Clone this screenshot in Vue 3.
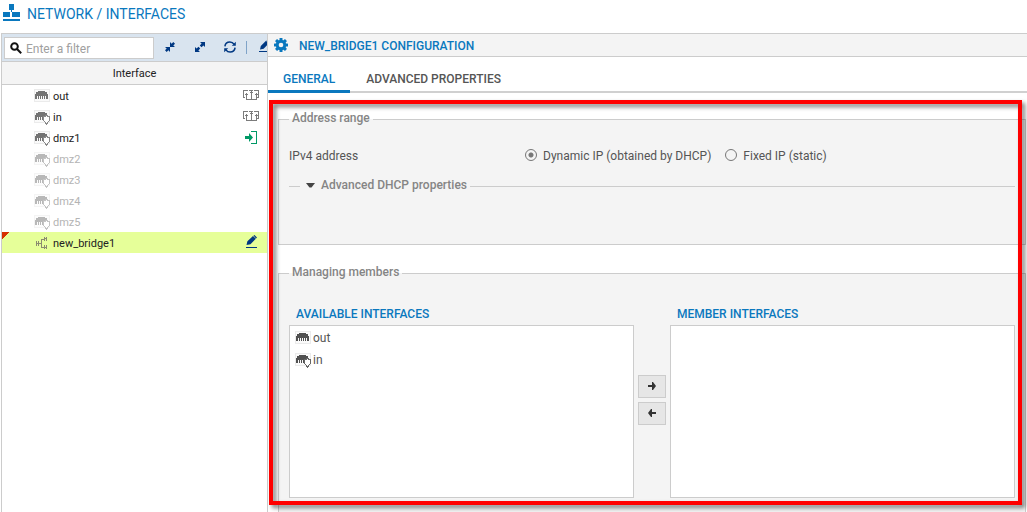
<template>
  <div class="app">
    <header class="page-header">
      <svg class="page-icon" width="17" height="17" viewBox="0 0 17 17" fill="#0a78be">
        <path d="M6 0h5v6H6zM0 8h7v5H0zM9 8h8v5H9zM0 15h17v2H0z" />
        <path d="M8 6h1v2H8z" />
      </svg>
      <h1 class="page-title">NETWORK / INTERFACES</h1>
    </header>

    <div class="layout">
      <aside class="sidebar">
        <div class="toolbar">
          <div class="search">
            <svg width="12" height="12" viewBox="0 0 12 12" fill="none" stroke="#111" stroke-width="2">
              <circle cx="4.5" cy="4.5" r="3.3" />
              <path d="M7 7l4.2 4.2" />
            </svg>
            <input v-model="filter" type="text" placeholder="Enter a filter" aria-label="Enter a filter" />
          </div>
          <button type="button" class="tool" aria-label="Collapse all">
            <svg width="10" height="10" viewBox="0 0 10 10" fill="#003882">
              <path d="M5 0v5h5L8.300 3.600 10 1.700 8.300 0 6.600 1.700zM5 10V5H0l1.700 1.400L0 8.300 1.700 10l1.700-1.700z" />
            </svg>
          </button>
          <button type="button" class="tool" aria-label="Expand all">
            <svg width="10" height="10" viewBox="0 0 10 10" fill="#003882">
              <path d="M10 0v5L8.400 3.400 6.500 5.200 4.800 3.500 6.600 1.600 5 0zM0 10V5l1.600 1.600L3.500 4.800 5.200 6.500 3.400 8.400 5 10z" />
            </svg>
          </button>
          <button type="button" class="tool" aria-label="Refresh">
            <svg width="12" height="12" viewBox="0 0 12 12" fill="none" stroke="#003882" stroke-width="1.5">
              <path d="M.9 5.300C1.200 2.900 3.300 1 5.900 1c1.700 0 3.200.8 4.100 2.200M11.100 6.700C10.800 9.100 8.700 11 6.100 11c-1.700 0-3.200-.8-4.100-2.200" />
              <path d="M11.800 .8v4H7.800zM.2 11.200v-4h4z" fill="#003882" stroke="none" />
            </svg>
          </button>
          <span class="separator"></span>
          <button type="button" class="tool tool-edit" aria-label="Edit">
            <svg width="12" height="13" viewBox="0 0 12 13" fill="#003882">
              <path d="M1 9.500l.8-3.500L7 .8 9.800 3.600 4.600 8.700zM7.500 .3l1-.3L11 2.300l-1 1zM0 11h12v1H0z" />
            </svg>
          </button>
        </div>

        <table class="interfaces">
          <thead>
            <tr><th>Interface</th></tr>
          </thead>
          <tbody>
            <tr
              v-for="item in filteredInterfaces"
              :key="item.name"
              :class="{ disabled: item.disabled, selected: item.name === selected }"
              @click="selected = item.name"
            >
              <td>
                <div class="row">
                  <svg v-if="item.type === 'bridge'" class="row-icon" width="17" height="16" viewBox="0 0 17 16" fill="none" stroke="#8a8a70" shape-rendering="crispEdges">
                    <path d="M2.500 6v5M4.500 6v5M2 8.500h6M7.500 4v9M7 4.500h3M7 12.500h3M10.500 2v4M12.500 2v4M10 3.500h3M10.500 10v4M12.500 10v4M10 12.500h3" />
                  </svg>
                  <svg v-else class="row-icon" width="17" height="16" viewBox="0 0 17 16" shape-rendering="crispEdges">
                    <path d="M.5 1.500h15v12H.5z" fill="#fafafa" stroke="#ebebeb" />
                    <path :d="portPath" fill="#747474" />
                    <path v-if="item.type === 'protected'" :d="shieldPath" fill="#fff" stroke="#8a8a8a" />
                  </svg>
                  <span class="row-name">{{ item.name }}</span>
                  <svg v-if="item.action === 'lan'" class="row-lan" width="16" height="13" viewBox="0 0 16 13" fill="none" stroke="#7c7c7c" shape-rendering="crispEdges">
                    <path d="M2 8.500H.5v-7H5M14 8.500h1.500v-7H11M6 1.500h4M8.500 1v10M3 10.500h11M3.500 4v7M13.500 4v7M2 5.500h3M12 5.500h3M7 3.500h3" />
                  </svg>
                  <svg v-if="item.action === 'enter'" class="row-enter" width="12" height="13" viewBox="0 0 12 13" fill="#009966">
                    <path d="M0 5h4V2l4 4.500L4 11V8H0z" />
                    <path d="M6 0h6v13H6v-1h5V1H6z" />
                  </svg>
                  <svg v-if="item.action === 'edit'" class="row-edit" width="12" height="13" viewBox="0 0 12 13" fill="#003882">
                    <path d="M.5 10l.9-3.700L7 1 9.800 3.800 4.500 9.200zM7.500 .5l1-.5L11 2.400l-1 1zM0 12h11v1H0z" />
                  </svg>
                </div>
              </td>
            </tr>
          </tbody>
        </table>
      </aside>

      <main class="config">
        <div class="config-header">
          <svg width="14" height="14" viewBox="0 0 14 14">
            <g fill="#0a78be">
              <rect v-for="a in [0, 45, 90, 135]" :key="a" x="5.500" width="3" height="14" rx=".5" :transform="`rotate(${a} 7 7)`" />
              <circle cx="7" cy="7" r="5.200" />
            </g>
            <circle cx="7" cy="7" r="2.300" fill="#f4f4f4" />
          </svg>
          <h2>NEW_BRIDGE1 CONFIGURATION</h2>
        </div>

        <nav class="tabs" role="tablist">
          <button
            v-for="tab in tabs"
            :key="tab"
            type="button"
            role="tab"
            class="tab"
            :class="{ active: tab === activeTab }"
            :aria-selected="tab === activeTab"
            @click="activeTab = tab"
          >{{ tab }}</button>
        </nav>

        <div class="content">
          <fieldset class="group">
            <legend>Address range</legend>
            <div class="field" role="radiogroup" aria-labelledby="ipv4-label">
              <span id="ipv4-label" class="field-label">IPv4 address</span>
              <label class="radio"><input v-model="mode" type="radio" name="mode" value="dhcp" /><span>Dynamic IP (obtained by DHCP)</span></label>
              <label class="radio"><input v-model="mode" type="radio" name="mode" value="static" /><span>Fixed IP (static)</span></label>
            </div>
            <fieldset class="advanced">
              <legend>
                <button type="button" class="toggle">
                  <svg width="9" height="5" viewBox="0 0 9 5" fill="#444"><path d="M0 0h9L5.500 4.500h-2z" /></svg>
                  Advanced DHCP properties
                </button>
              </legend>
            </fieldset>
          </fieldset>

          <fieldset class="group members">
            <legend>Managing members</legend>
            <div class="picker">
              <div class="picker-col">
                <h3>AVAILABLE INTERFACES</h3>
                <ul class="list">
                  <li v-for="item in available" :key="item.name">
                    <svg width="17" height="16" viewBox="0 0 17 16" shape-rendering="crispEdges">
                      <path d="M.5 1.500h15v12H.5z" fill="#fafafa" stroke="#ebebeb" />
                      <path :d="portPath" fill="#505050" />
                      <path v-if="item.type === 'protected'" :d="shieldPath" fill="#fff" stroke="#666" />
                    </svg>
                    {{ item.name }}
                  </li>
                </ul>
              </div>
              <div class="picker-buttons">
                <button type="button" aria-label="Add member">
                  <svg width="8" height="8" viewBox="0 0 8 8" fill="#333"><path d="M0 3h4V0h1l3 4-3 4H4V5H0z" /></svg>
                </button>
                <button type="button" aria-label="Remove member">
                  <svg width="8" height="8" viewBox="0 0 8 8" fill="#333"><path d="M8 3H4V0H3L0 4l3 4h1V5h4z" /></svg>
                </button>
              </div>
              <div class="picker-col">
                <h3>MEMBER INTERFACES</h3>
                <ul class="list"></ul>
              </div>
            </div>
          </fieldset>

          <div class="highlight"></div>
        </div>
      </main>
    </div>
  </div>
</template>

<script setup>
import { ref, computed } from 'vue'

// Icon shapes
const portPath = 'M4 3h7v1h2v2h1v5h-2V8h-1v3h-1V8H9v3H8V8H7v3H6V8H5v3H4V8H3v3H1V6h1V4h2z'
const shieldPath = 'M9.500 7.500h2v-1h2v1h2v4l-3 3.500-3-3.500z'

const interfaces = [
  { name: 'out', type: 'port', action: 'lan' },
  { name: 'in', type: 'protected', action: 'lan' },
  { name: 'dmz1', type: 'protected', action: 'enter' },
  { name: 'dmz2', type: 'protected', disabled: true },
  { name: 'dmz3', type: 'protected', disabled: true },
  { name: 'dmz4', type: 'protected', disabled: true },
  { name: 'dmz5', type: 'protected', disabled: true },
  { name: 'new_bridge1', type: 'bridge', action: 'edit' }
]

const tabs = ['GENERAL', 'ADVANCED PROPERTIES']

const filter = ref('')
const selected = ref('new_bridge1')
const activeTab = ref('GENERAL')
const mode = ref('dhcp')

const filteredInterfaces = computed(() =>
  interfaces.filter((item) => item.name.includes(filter.value))
)

const available = computed(() => interfaces.slice(0, 2))
</script>

<style>
body {
  background: #fff;
}
</style>

<style scoped>
.app {
  display: flex;
  flex-direction: column;
  min-height: 100vh;
  font-family: Roboto, "Liberation Sans", sans-serif;
  font-size: 12px;
  line-height: 16px;
  color: #555;
}

.app * {
  box-sizing: border-box;
}

button {
  border: 0;
  padding: 0;
  background: none;
  font: inherit;
  color: inherit;
  cursor: pointer;
}

h1,
h2,
h3 {
  margin: 0;
  font-weight: 500;
  font-size: 12px;
  color: #0a78be;
}

svg {
  display: block;
  flex-shrink: 0;
}

.page-header {
  display: flex;
  align-items: center;
  gap: 7px;
  height: 33px;
  padding: 0 3px 8px;
}

.page-title {
  font-size: 14px;
  font-weight: 400;
  padding-top: 3px;
}

.layout {
  display: flex;
  flex: 1;
}

/* Sidebar */
.sidebar {
  width: 266px;
  margin-left: 1px;
  border: 1px solid #ccc;
  border-width: 1px 0 0 1px;
  flex-shrink: 0;
}

.toolbar {
  display: flex;
  align-items: center;
  height: 28px;
  padding-left: 2px;
  background: #d9e4ef;
  border-bottom: 1px solid #ccc;
  overflow: hidden;
}

.search {
  display: flex;
  align-items: center;
  gap: 4px;
  width: 150px;
  height: 22px;
  margin-right: 1px;
  padding: 0 5px;
  background: #fff;
  border: 1px solid #ccc;
  flex-shrink: 0;
}

.search input {
  flex: 1;
  min-width: 0;
  border: 0;
  padding: 2px 0 0;
  outline: none;
  background: none;
  font: inherit;
  color: #444;
}

.search input::placeholder {
  color: #a0a0a0;
}

.tool {
  display: flex;
  align-items: center;
  justify-content: center;
  width: 30px;
  height: 22px;
  padding-bottom: 2px;
  flex-shrink: 0;
}

.separator {
  width: 1px;
  height: 13px;
  margin: 0 12px 0 1px;
  background: #7fa3c8;
  flex-shrink: 0;
}

.tool-edit {
  width: 12px;
}

.interfaces {
  width: 100%;
  border-spacing: 0;
  font-size: 11px;
  color: #222;
}

.interfaces th {
  height: 23px;
  padding: 1px 0 0;
  font-weight: 400;
  background: #f4f4f4;
  border-bottom: 1px solid #ccc;
}

.interfaces td {
  padding: 0;
}

.row {
  display: flex;
  align-items: center;
  height: 21px;
  padding: 0 8px 0 32px;
}

.row-icon {
  margin-right: 2px;
}

.row-name {
  flex: 1;
  padding-top: 2px;
}

.row-lan {
  margin-bottom: 1px;
}

.row-edit {
  margin: 0 1px 2px 0;
}

.row-enter {
  margin: 0 2px 1px 0;
}

.disabled {
  color: #b4b4b4;
}

.disabled .row-icon {
  opacity: 0.5;
}

.selected .row {
  background: linear-gradient(135deg, #d63000 5px, #e6ff99 5px);
}

/* Configuration panel */
.config {
  display: flex;
  flex-direction: column;
  flex: 1;
  min-width: 0;
  border-left: 1px solid #ccc;
}

.config-header {
  display: flex;
  align-items: center;
  gap: 11px;
  height: 24px;
  padding-left: 6px;
  background: #f4f4f4;
  border: 1px solid #ccc;
  border-width: 1px 0;
}

.config-header h2 {
  padding-top: 2px;
}

.tabs {
  display: flex;
  gap: 1px;
  height: 36px;
  box-shadow: inset 0 -2px #d0d0d0;
}

.tab {
  padding: 10px 15px 0;
  border-bottom: 3px solid transparent;
  font-weight: 500;
  color: #555;
}

.tab.active {
  color: #0a78be;
  border-color: #0a78be;
}

.content {
  position: relative;
  display: flex;
  flex-direction: column;
  flex: 1;
  gap: 20px;
  padding: 18px 1px 0 10px;
}

.highlight {
  position: absolute;
  inset: 7px 5px 7px 1px;
  border: 4px solid #f00;
  filter: drop-shadow(3px 3px 2px rgba(0, 0, 0, 0.5));
  pointer-events: none;
}

fieldset {
  min-width: 0;
  margin: 0;
  border: 1px solid #ccc;
}

legend {
  padding: 0 3px 2px;
  line-height: 14px;
  font-weight: 500;
  color: #858585;
}

.group {
  padding: 18px 10px 50px;
  background: #f4f4f4;
}

.field {
  display: flex;
  align-items: center;
  height: 20px;
}

.field-label {
  width: 236px;
  padding-top: 2px;
}

.radio {
  display: flex;
  align-items: center;
  margin-right: 14px;
}

.radio span {
  padding-top: 2px;
}

.radio input {
  appearance: none;
  width: 12px;
  height: 12px;
  margin: 0 6px 0 0;
  border: 1px solid #777;
  border-radius: 50%;
}

.radio input:checked {
  background: radial-gradient(circle, #777 2px, transparent 3px);
}

.advanced {
  margin-top: 13px;
  padding: 0;
  border-width: 1px 0 0;
}

.advanced legend {
  margin-left: 11px;
}

.toggle {
  display: flex;
  align-items: center;
  gap: 6px;
  padding-left: 3px;
}

.members {
  flex: 1;
  padding-bottom: 0;
  border-bottom: 0;
}

.picker {
  display: flex;
}

.picker-col {
  flex: 1;
}

.picker h3 {
  height: 26px;
  padding: 7px 7px 0;
}

.list {
  height: 173px;
  margin: 0;
  padding: 1px 5px;
  background: #fff;
  border: 1px solid #ccc;
  list-style: none;
}

.list li {
  display: flex;
  align-items: center;
  gap: 1px;
  height: 22px;
}

.picker-buttons {
  display: flex;
  flex-direction: column;
  justify-content: center;
  gap: 4px;
  width: 36px;
  padding: 2px 4px 0;
}

.picker-buttons button {
  display: flex;
  align-items: center;
  justify-content: center;
  height: 23px;
  background: #e6e6e6;
  border: 1px solid #ccc;
}
</style>
